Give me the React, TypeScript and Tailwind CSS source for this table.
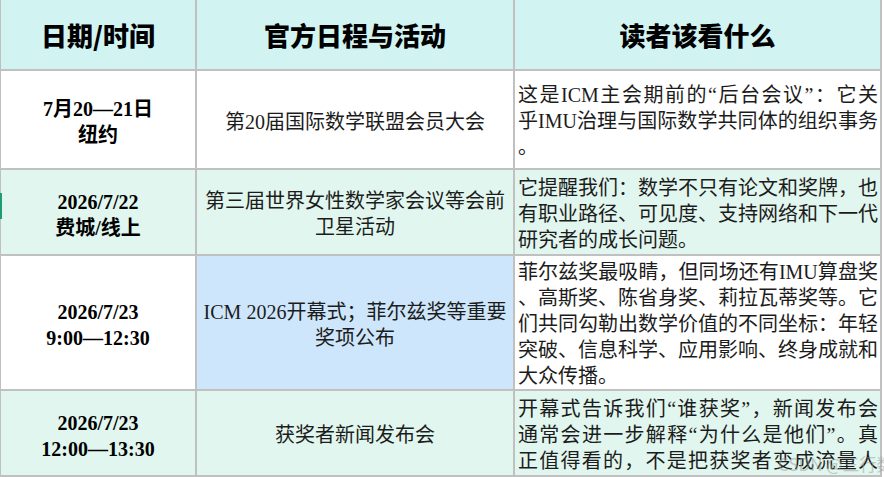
const serif = "font-['Liberation_Serif','Noto_Sans_CJK_SC',serif]";

type Row = {
  date: string[];
  event: string[];
  note: string[];
  bg: [string, string, string];
};

const rows: Row[] = [
  {
    date: ['7月20—21日', '纽约'],
    event: ['第20届国际数学联盟会员大会'],
    note: ['这是ICM主会期前的“后台会议”：它关', '乎IMU治理与国际数学共同体的组织事务', '。'],
    bg: ['bg-white', 'bg-white', 'bg-white'],
  },
  {
    date: ['2026/7/22', '费城/线上'],
    event: ['第三届世界女性数学家会议等会前', '卫星活动'],
    note: ['它提醒我们：数学不只有论文和奖牌，也', '有职业路径、可见度、支持网络和下一代', '研究者的成长问题。'],
    bg: ['bg-[#e1f6ee]', 'bg-[#e1f6ee]', 'bg-[#e1f6ee]'],
  },
  {
    date: ['2026/7/23', '9:00—12:30'],
    event: ['ICM 2026开幕式；菲尔兹奖等重要', '奖项公布'],
    note: [
      '菲尔兹奖最吸睛，但同场还有IMU算盘奖',
      '、高斯奖、陈省身奖、莉拉瓦蒂奖等。它',
      '们共同勾勒出数学价值的不同坐标：年轻',
      '突破、信息科学、应用影响、终身成就和',
      '大众传播。',
    ],
    bg: ['bg-white', 'bg-[#cde6fb]', 'bg-white'],
  },
  {
    date: ['2026/7/23', '12:00—13:30'],
    event: ['获奖者新闻发布会'],
    note: ['开幕式告诉我们“谁获奖”，新闻发布会', '通常会进一步解释“为什么是他们”。真', '正值得看的，不是把获奖者变成流量人'],
    bg: ['bg-[#e1f6ee]', 'bg-[#e1f6ee]', 'bg-[#e1f6ee]'],
  },
];

const headers = ['日期/时间', '官方日程与活动', '读者该看什么'];

export default function App() {
  return (
    <div lang="zh-CN" className="relative h-[477px] w-[884px] overflow-hidden bg-white">
      <div className="grid w-[882px] grid-cols-[194px_316px_365px] grid-rows-[69px_97px_84px_133px_84px] gap-[2px] bg-[#c0c0c0] pb-[2px] pl-px pr-[2px]">
        {/* Header */}
        {headers.map((h) => (
          <div
            key={h}
            className="flex items-center justify-center bg-[#d1f3f1] font-['Noto_Sans_CJK_SC',sans-serif] text-[26px] font-black text-black"
          >
            {h}
          </div>
        ))}

        {rows.map((row, i) => [
          <div
            key={`d${i}`}
            className={`flex flex-col items-center justify-center pt-[5px] text-[20px] font-bold leading-[26px] text-black ${serif} ${row.bg[0]}`}
          >
            {row.date.map((l) => (
              <div key={l} className="whitespace-nowrap">{l}</div>
            ))}
          </div>,
          <div
            key={`e${i}`}
            className={`flex flex-col items-center justify-center pt-[4px] text-[20px] leading-[26px] text-[#1c1c1c] ${serif} ${row.bg[1]}`}
          >
            {row.event.map((l) => (
              <div key={l} className="whitespace-nowrap">{l}</div>
            ))}
          </div>,
          <div
            key={`n${i}`}
            className={`flex flex-col justify-center pl-[3px] pr-[2px] pt-[3px] text-[20px] leading-[26px] text-[#1c1c1c] ${serif} ${row.bg[2]}`}
          >
            {row.note.map((l, j) => (
              <div
                key={j}
                className={
                  j < row.note.length - 1 || i === rows.length - 1
                    ? 'whitespace-nowrap text-justify [text-align-last:justify]'
                    : 'whitespace-nowrap text-left'
                }
              >
                {l}
              </div>
            ))}
          </div>,
        ])}
      </div>

      {/* selection marker on the left edge */}
      <div className="absolute left-0 top-[193px] h-[26px] w-[2px] bg-[#1f9d6f]" />

      {/* watermark */}
      <div className="pointer-events-none absolute left-[778px] top-[451px] whitespace-nowrap font-['Noto_Sans_CJK_SC',sans-serif] text-[17px] text-[#9a9a9a] opacity-50">
        CSDN @三行数学
      </div>
    </div>
  );
}
